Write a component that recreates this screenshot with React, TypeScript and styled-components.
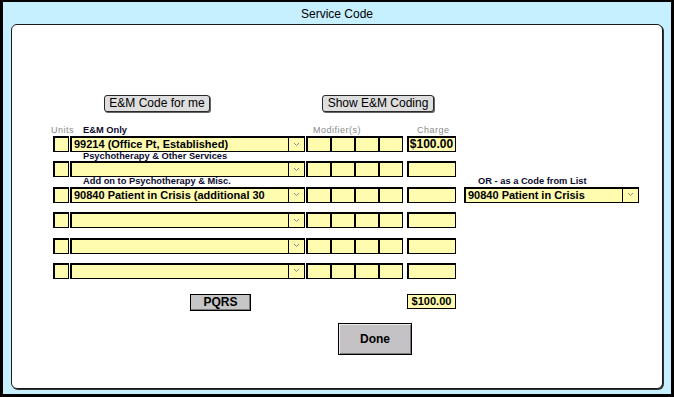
import styled, { createGlobalStyle } from 'styled-components';

const YELLOW = '#fffcb0';

const GlobalStyle = createGlobalStyle`
  body {
    margin: 0;
    font-family: "Liberation Sans", Arial, sans-serif;
  }
`;

const Frame = styled.div`
  width: 674px;
  height: 397px;
  box-sizing: border-box;
  border: solid #000;
  border-width: 2px 3px 3px 3px;
  background: #c6efff;
  display: flex;
  flex-direction: column;
  font-family: "Liberation Sans", Arial, sans-serif;
  color: #000;
`;

const Title = styled.div`
  height: 22px;
  box-sizing: border-box;
  padding-top: 3px;
  line-height: 19px;
  font-size: 12px;
  text-align: center;
`;

const Panel = styled.div`
  margin: 0 8px;
  height: 365px;
  box-sizing: border-box;
  background: #fff;
  border: 1px solid #1a1a1a;
  border-radius: 6px;
  box-shadow: 1px 1px 0 #333;
  display: flex;
  flex-direction: column;
  padding-top: 70px;
`;

const ButtonRow = styled.div`
  display: flex;
  padding-left: 92px;
  gap: 112px;
`;

const TopButton = styled.button<{ $w: number }>`
  width: ${(p) => p.$w}px;
  height: 17px;
  box-sizing: border-box;
  padding: 0;
  border: 1px solid #2a2a2a;
  border-radius: 3px;
  background: #dedede;
  box-shadow: 1px 1px 0 #666;
  font-family: inherit;
  font-size: 12px;
  line-height: 15px;
  color: #000;
`;

const Form = styled.div`
  display: flex;
  flex-direction: column;
  padding-left: 41px;
  margin-top: 13px;
`;

const HeaderRow = styled.div`
  display: flex;
  height: 11px;
  line-height: 11px;
  white-space: nowrap;
`;

const HeadGray = styled.div<{ $w?: number; $ml?: number }>`
  width: ${(p) => (p.$w ? `${p.$w}px` : 'auto')};
  margin-left: ${(p) => p.$ml ?? 0}px;
  font-size: 9px;
  letter-spacing: 0.5px;
  color: #8a8a8a;
`;

const GroupLabel = styled.div<{ $w?: number; $pl: number }>`
  width: ${(p) => (p.$w ? `${p.$w}px` : 'auto')};
  box-sizing: border-box;
  padding-left: ${(p) => p.$pl}px;
  font-size: 9.3px;
  font-weight: bold;
  color: #0b0b2e;
`;

const LabelRow = styled.div`
  display: flex;
  height: 9.4px;
  line-height: 9.4px;
  white-space: nowrap;
`;

const EntryRow = styled.div`
  display: flex;
  height: 16px;
`;

const UnitsBox = styled.div`
  width: 16px;
  box-sizing: border-box;
  border: 1px solid #000;
  box-shadow: inset 1px 1px 0 #000;
  background: ${YELLOW};
`;

const SelectBox = styled.div<{ $w: number; $ml: number }>`
  width: ${(p) => p.$w}px;
  margin-left: ${(p) => p.$ml}px;
  box-sizing: border-box;
  border: 1px solid #000;
  box-shadow: inset 1px 1px 0 #000;
  background: ${YELLOW};
  display: flex;
`;

const SelectValue = styled.div`
  flex: 1;
  overflow: hidden;
  white-space: nowrap;
  padding-left: 3px;
  font-size: 11px;
  font-weight: bold;
  line-height: 14px;
`;

const SelectArrow = styled.div`
  width: 15px;
  border-left: 1px solid #000;
  display: flex;
  align-items: center;
  justify-content: center;
`;

const ModGroup = styled.div`
  width: 97px;
  margin-left: 1px;
  box-sizing: border-box;
  border: 1px solid #000;
  background: #000;
  display: grid;
  grid-template-columns: repeat(4, 1fr);
  gap: 1px;
`;

const ModCell = styled.div`
  background: ${YELLOW};
  box-shadow: inset 1px 1px 0 #000;
`;

const ChargeBox = styled.div`
  width: 49px;
  margin-left: 4px;
  box-sizing: border-box;
  border: 1px solid #000;
  box-shadow: inset 1px 1px 0 #000;
  background: ${YELLOW};
  font-size: 12px;
  font-weight: bold;
  line-height: 14px;
  text-align: center;
`;

const Footer = styled.div`
  display: flex;
  align-items: flex-start;
  margin-top: 15px;
`;

const PqrsButton = styled.button`
  width: 61px;
  height: 17px;
  margin-left: 137px;
  box-sizing: border-box;
  padding: 0;
  border: 1px solid #000;
  background: #c6c6c6;
  box-shadow: inset -1px -1px 0 #777;
  font-family: inherit;
  font-size: 12px;
  font-weight: bold;
  line-height: 15px;
  color: #000;
`;

const TotalBox = styled.div`
  width: 49px;
  height: 15px;
  margin-left: 156px;
  box-sizing: border-box;
  border: 1px solid #000;
  background: ${YELLOW};
  font-size: 11px;
  font-weight: bold;
  line-height: 13px;
  text-align: center;
`;

const DoneButton = styled.button`
  width: 74px;
  height: 32px;
  margin: 12px 0 0 285px;
  box-sizing: border-box;
  padding: 0;
  border: 1px solid #000;
  background: #c4c2c4;
  box-shadow: inset 1px 1px 0 #ececec, inset -1px -1px 0 #7a7a7a;
  font-family: inherit;
  font-size: 12px;
  font-weight: bold;
  color: #000;
`;

const Chevron = () => (
  <svg width="7" height="5" viewBox="0 0 7 5">
    <path d="M1 1 L3.5 3.5 L6 1" stroke="#8a8a8a" strokeWidth="1" fill="none" />
  </svg>
);

type Line = {
  label?: string;
  value?: string;
  charge?: string;
  right?: { label: string; value: string };
};

const lines: Line[] = [
  { value: '99214 (Office Pt, Established)', charge: '$100.00' },
  { label: 'Psychotherapy & Other Services' },
  {
    label: 'Add on to Psychotherapy & Misc.',
    value: '90840 Patient in Crisis (additional 30',
    right: { label: 'OR - as a Code from List', value: '90840 Patient in Crisis' },
  },
  {},
  {},
  {},
];

const App = () => (
  <>
    <GlobalStyle />
    <Frame>
      <Title>Service Code</Title>
      <Panel>
        <ButtonRow>
          <TopButton $w={106}>E&amp;M Code for me</TopButton>
          <TopButton $w={112}>Show E&amp;M Coding</TopButton>
        </ButtonRow>
        <Form>
          <HeaderRow>
            <HeadGray $w={32} $ml={-2}>Units</HeadGray>
            <GroupLabel $w={230} $pl={0}>E&amp;M Only</GroupLabel>
            <HeadGray $w={104}>Modifier(s)</HeadGray>
            <HeadGray>Charge</HeadGray>
          </HeaderRow>
          {lines.map((line, i) => (
            <div key={i}>
              {i > 0 && (
                <LabelRow>
                  <GroupLabel $w={411} $pl={30}>{line.label ?? ''}</GroupLabel>
                  {line.right && <GroupLabel $pl={14}>{line.right.label}</GroupLabel>}
                </LabelRow>
              )}
              <EntryRow>
                <UnitsBox />
                <SelectBox $w={235} $ml={1}>
                  <SelectValue>{line.value ?? ''}</SelectValue>
                  <SelectArrow>
                    <Chevron />
                  </SelectArrow>
                </SelectBox>
                <ModGroup>
                  <ModCell />
                  <ModCell />
                  <ModCell />
                  <ModCell />
                </ModGroup>
                <ChargeBox>{line.charge ?? ''}</ChargeBox>
                {line.right && (
                  <SelectBox $w={175} $ml={8}>
                    <SelectValue>{line.right.value}</SelectValue>
                    <SelectArrow>
                      <Chevron />
                    </SelectArrow>
                  </SelectBox>
                )}
              </EntryRow>
            </div>
          ))}
          <Footer>
            <PqrsButton>PQRS</PqrsButton>
            <TotalBox>$100.00</TotalBox>
          </Footer>
          <DoneButton>Done</DoneButton>
        </Form>
      </Panel>
    </Frame>
  </>
);

export default App;
